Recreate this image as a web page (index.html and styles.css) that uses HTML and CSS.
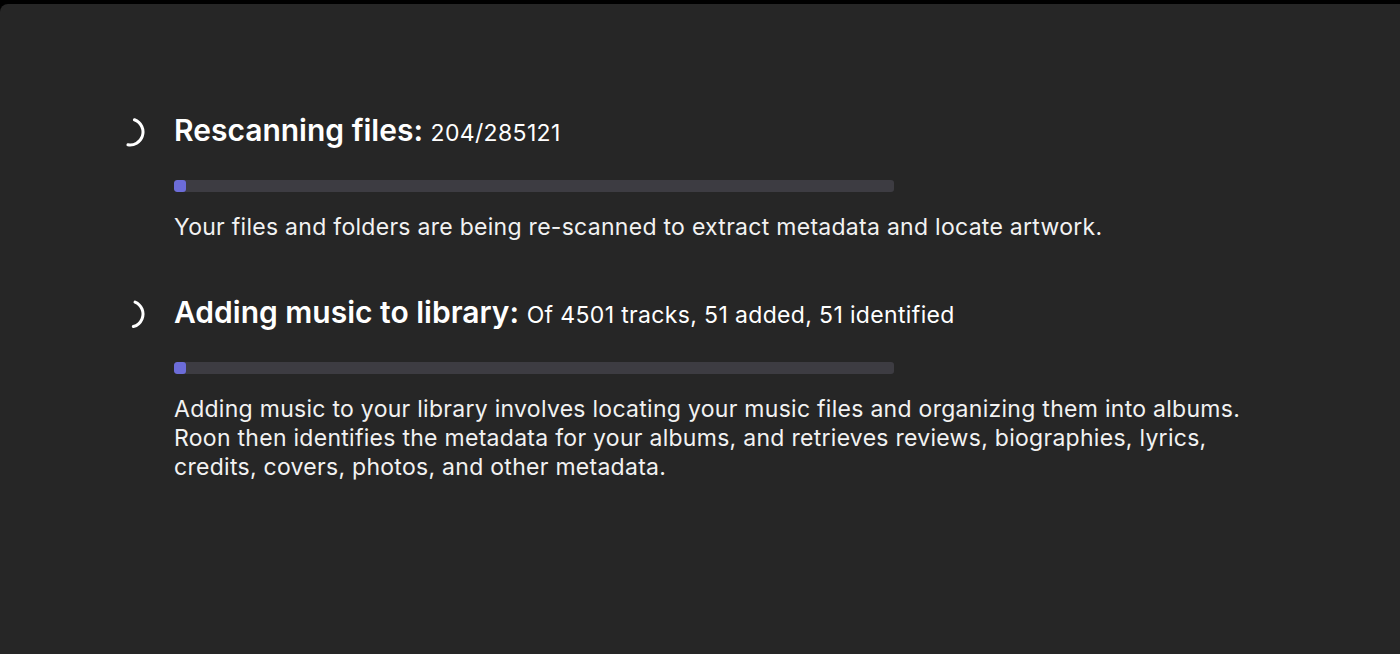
FILE: index.html
```html
<!DOCTYPE html>
<html lang="en">
<head>
    <meta charset="UTF-8" />
    <title>Library Status</title>
    <link rel="stylesheet" href="styles.css">
</head>
<body>
    <div class="panel">
        <div class="task">
            <svg class="spinner" width="30" height="30" viewBox="0 0 30 30">
                <circle cx="15" cy="15" r="13" fill="none" stroke="#fff" stroke-width="3" stroke-linecap="round" stroke-dasharray="38 200" transform="rotate(-70 15 15)" />
            </svg>
            <div class="task-body">
                <h2 class="task-title">Rescanning files: <span class="task-count">204/285121</span></h2>
                <div class="bar"><div class="bar-fill" style="width: 12px;"></div></div>
                <p class="task-desc">Your files and folders are being re-scanned to extract metadata and locate artwork.</p>
            </div>
        </div>

        <div class="task">
            <svg class="spinner" width="30" height="30" viewBox="0 0 30 30">
                <circle cx="15" cy="15" r="13" fill="none" stroke="#fff" stroke-width="3" stroke-linecap="round" stroke-dasharray="32 200" transform="rotate(-67 15 15)" />
            </svg>
            <div class="task-body">
                <h2 class="task-title">Adding music to library: <span class="task-count">Of 4501 tracks, 51 added, 51 identified</span></h2>
                <div class="bar"><div class="bar-fill" style="width: 12px;"></div></div>
                <p class="task-desc">Adding music to your library involves locating your music files and organizing them into albums.<br>Roon then identifies the metadata for your albums, and retrieves reviews, biographies, lyrics,<br>credits, covers, photos, and other metadata.</p>
            </div>
        </div>
    </div>
</body>
</html>
```

FILE: styles.css
```css
html, body {
    margin: 0;
    height: 100%;
    background: #000;
}

body {
    padding-top: 4px;
    box-sizing: border-box;
    font-family: Inter, "Liberation Sans", sans-serif;
    color: #fff;
}

.panel {
    height: 100%;
    background: #262626;
    border-top-left-radius: 8px;
    padding: 106px 0 0 115px;
    box-sizing: border-box;
}

.task {
    display: flex;
    align-items: flex-start;
    margin-bottom: 50px;
}

.spinner {
    flex: none;
    margin-right: 29px;
    margin-top: 7px;
}

.task-body {
    display: flex;
    flex-direction: column;
}

.task-title {
    margin: 0;
    font-size: 30px;
    font-weight: 600;
    line-height: 40px;
    white-space: nowrap;
}

.task-count {
    font-size: 23px;
    font-weight: 400;
    letter-spacing: 0.35px;
}

.bar {
    width: 720px;
    height: 12px;
    margin-top: 27px;
    background: #3d3c42;
    border-radius: 3px;
    overflow: hidden;
}

.bar-fill {
    height: 100%;
    background: #6c6cd8;
    border-radius: 3px;
}

.task-desc {
    margin: 21px 0 0;
    font-size: 23px;
    line-height: 29px;
    letter-spacing: 0.28px;
    color: #f2f2f2;
}
```
